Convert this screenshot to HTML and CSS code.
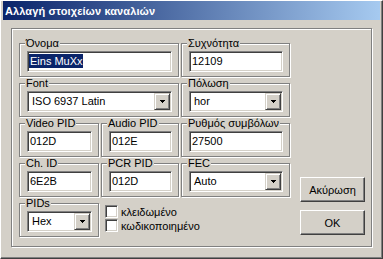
FILE: index.html
```html
<!DOCTYPE html>
<html lang="el">
<head>
<meta charset="utf-8">
<title>Αλλαγή στοιχείων καναλιών</title>
<link rel="stylesheet" href="styles.css">
</head>
<body>
<div class="window">
  <div class="titlebar"><span class="title">Αλλαγή στοιχείων καναλιών</span></div>
  <div class="client">
    <div class="panel">
      <div class="fields">
        <fieldset class="group r1 c12">
          <legend>Όνομα</legend>
          <div class="edit"><span class="sel">Eins MuXx</span></div>
        </fieldset>
        <fieldset class="group r1 c3">
          <legend>Συχνότητα</legend>
          <div class="edit">12109</div>
        </fieldset>

        <fieldset class="group r2 c12">
          <legend>Font</legend>
          <div class="combo"><span class="combo-text">ISO 6937 Latin</span><span class="combo-btn"><svg width="5" height="3" viewBox="0 0 5 3"><rect x="0" y="0" width="5" height="1"/><rect x="1" y="1" width="3" height="1"/><rect x="2" y="2" width="1" height="1"/></svg></span></div>
        </fieldset>
        <fieldset class="group r2 c3">
          <legend>Πόλωση</legend>
          <div class="combo"><span class="combo-text">hor</span><span class="combo-btn"><svg width="5" height="3" viewBox="0 0 5 3"><rect x="0" y="0" width="5" height="1"/><rect x="1" y="1" width="3" height="1"/><rect x="2" y="2" width="1" height="1"/></svg></span></div>
        </fieldset>

        <fieldset class="group r3 c1">
          <legend>Video PID</legend>
          <div class="edit">012D</div>
        </fieldset>
        <fieldset class="group r3 c2">
          <legend>Audio PID</legend>
          <div class="edit">012E</div>
        </fieldset>
        <fieldset class="group r3 c3">
          <legend>Ρυθμός συμβόλων</legend>
          <div class="edit">27500</div>
        </fieldset>

        <fieldset class="group r4 c1">
          <legend>Ch. ID</legend>
          <div class="edit">6E2B</div>
        </fieldset>
        <fieldset class="group r4 c2">
          <legend>PCR PID</legend>
          <div class="edit">012D</div>
        </fieldset>
        <fieldset class="group r4 c3">
          <legend>FEC</legend>
          <div class="combo"><span class="combo-text">Auto</span><span class="combo-btn"><svg width="5" height="3" viewBox="0 0 5 3"><rect x="0" y="0" width="5" height="1"/><rect x="1" y="1" width="3" height="1"/><rect x="2" y="2" width="1" height="1"/></svg></span></div>
        </fieldset>

        <fieldset class="group r5 c1">
          <legend>PIDs</legend>
          <div class="combo"><span class="combo-text">Hex</span><span class="combo-btn"><svg width="5" height="3" viewBox="0 0 5 3"><rect x="0" y="0" width="5" height="1"/><rect x="1" y="1" width="3" height="1"/><rect x="2" y="2" width="1" height="1"/></svg></span></div>
        </fieldset>
        <div class="checks r5">
          <label class="check"><span class="box"></span><span>κλειδωμένο</span></label>
          <label class="check"><span class="box"></span><span>κωδικοποιημένο</span></label>
        </div>

        <div class="buttons">
          <button class="btn" type="button">Ακύρωση</button>
          <button class="btn" type="button">OK</button>
        </div>
      </div>
    </div>
  </div>
</div>
</body>
</html>
```
FILE: styles.css
```css
html, body {
  margin: 0;
  padding: 0;
  background: #d4d0c8;
}

body {
  font-family: "Liberation Sans", Arial, sans-serif;
  font-size: 11px;
  color: #000;
}

.window {
  width: 383px;
  height: 259px;
  box-sizing: border-box;
  background: #d4d0c8;
  border-style: solid;
  border-width: 1px;
  border-color: #ffffff #404040 #404040 #ffffff;
  box-shadow: inset -1px -1px 0 #808080;
  padding: 0 2px 2px 2px;
  display: flex;
  flex-direction: column;
}

.titlebar {
  height: 19px;
  flex: none;
  background: linear-gradient(to right, #0a246a, #a6caf0);
  display: flex;
  align-items: center;
  padding-left: 2px;
}

.title {
  color: #fff;
  font-weight: bold;
  font-size: 11px;
  letter-spacing: 0.1px;
}

.client {
  flex: 1;
  padding: 8px 0 0 8px;
}

.panel {
  width: 361px;
  height: 219px;
  box-sizing: border-box;
  border: 1px solid #808080;
  box-shadow: inset 1px 1px 0 #fff, 1px 1px 0 #fff;
  padding: 9px 6px 9px 7px;
}

.fields {
  display: grid;
  grid-template-columns: 80px 78px 109px 65px;
  grid-template-rows: repeat(5, 39px);
  column-gap: 2px;
  row-gap: 1px;
}

.r1 { grid-row: 1; }
.r2 { grid-row: 2; }
.r3 { grid-row: 3; }
.r4 { grid-row: 4; }
.r5 { grid-row: 5; }
.c1 { grid-column: 1; }
.c2 { grid-column: 2; }
.c12 { grid-column: 1 / span 2; }
.c3 { grid-column: 3; }

.group {
  margin: 0;
  min-width: 0;
  box-sizing: border-box;
  height: 39px;
  border: 1px solid #808080;
  box-shadow: inset 1px 1px 0 #fff, 1px 1px 0 #fff;
  padding: 2px 6px 0 7px;
}

.group legend {
  padding: 0 1px;
  margin-left: -2px;
  line-height: 11px;
  background: #d4d0c8;
}

.edit {
  height: 21px;
  box-sizing: border-box;
  background: #fff;
  border-style: solid;
  border-width: 1px;
  border-color: #808080 #fff #fff #808080;
  box-shadow: inset 1px 1px 0 #404040, inset -1px -1px 0 #d4d0c8;
  padding: 1px 2px;
  line-height: 17px;
  white-space: nowrap;
  overflow: hidden;
}

.sel {
  background: #0a246a;
  color: #fff;
  margin-left: -1px;
  padding: 0 0 0 1px;
  display: inline-block;
  line-height: 14px;
}

.combo {
  height: 21px;
  box-sizing: border-box;
  background: #fff;
  border-style: solid;
  border-width: 1px;
  border-color: #808080 #fff #fff #808080;
  box-shadow: inset 1px 1px 0 #404040, inset -1px -1px 0 #d4d0c8;
  padding: 1px;
  display: flex;
}

.combo-text {
  flex: 1;
  padding-left: 3px;
  line-height: 17px;
  white-space: nowrap;
  overflow: hidden;
}

.combo-btn {
  width: 16px;
  height: 17px;
  box-sizing: border-box;
  background: #d4d0c8;
  border: 1px solid;
  border-color: #d4d0c8 #404040 #404040 #d4d0c8;
  box-shadow: inset 1px 1px 0 #fff, inset -1px -1px 0 #808080;
  display: flex;
  align-items: center;
  justify-content: center;
}

.combo-btn svg {
  display: block;
  fill: #000;
  shape-rendering: crispEdges;
}

.checks {
  grid-column: 2 / span 2;
  padding: 7px 0 0 4px;
  display: flex;
  flex-direction: column;
  gap: 1px;
}

.check {
  display: flex;
  align-items: center;
  gap: 3px;
  height: 13px;
}

.box {
  width: 13px;
  height: 13px;
  box-sizing: border-box;
  background: #fff;
  border-style: solid;
  border-width: 1px;
  border-color: #808080 #fff #fff #808080;
  box-shadow: inset 1px 1px 0 #404040, inset -1px -1px 0 #d4d0c8;
  flex: none;
}

.buttons {
  grid-column: 4;
  grid-row: 4 / span 2;
  margin-left: 8px;
  padding-top: 19px;
  display: flex;
  flex-direction: column;
  gap: 8px;
}

.btn {
  width: 65px;
  height: 25px;
  box-sizing: border-box;
  margin: 0;
  padding: 0;
  background: #d4d0c8;
  border: 1px solid;
  border-color: #fff #404040 #404040 #fff;
  box-shadow: inset -1px -1px 0 #808080;
  font: inherit;
  color: #000;
}
```
